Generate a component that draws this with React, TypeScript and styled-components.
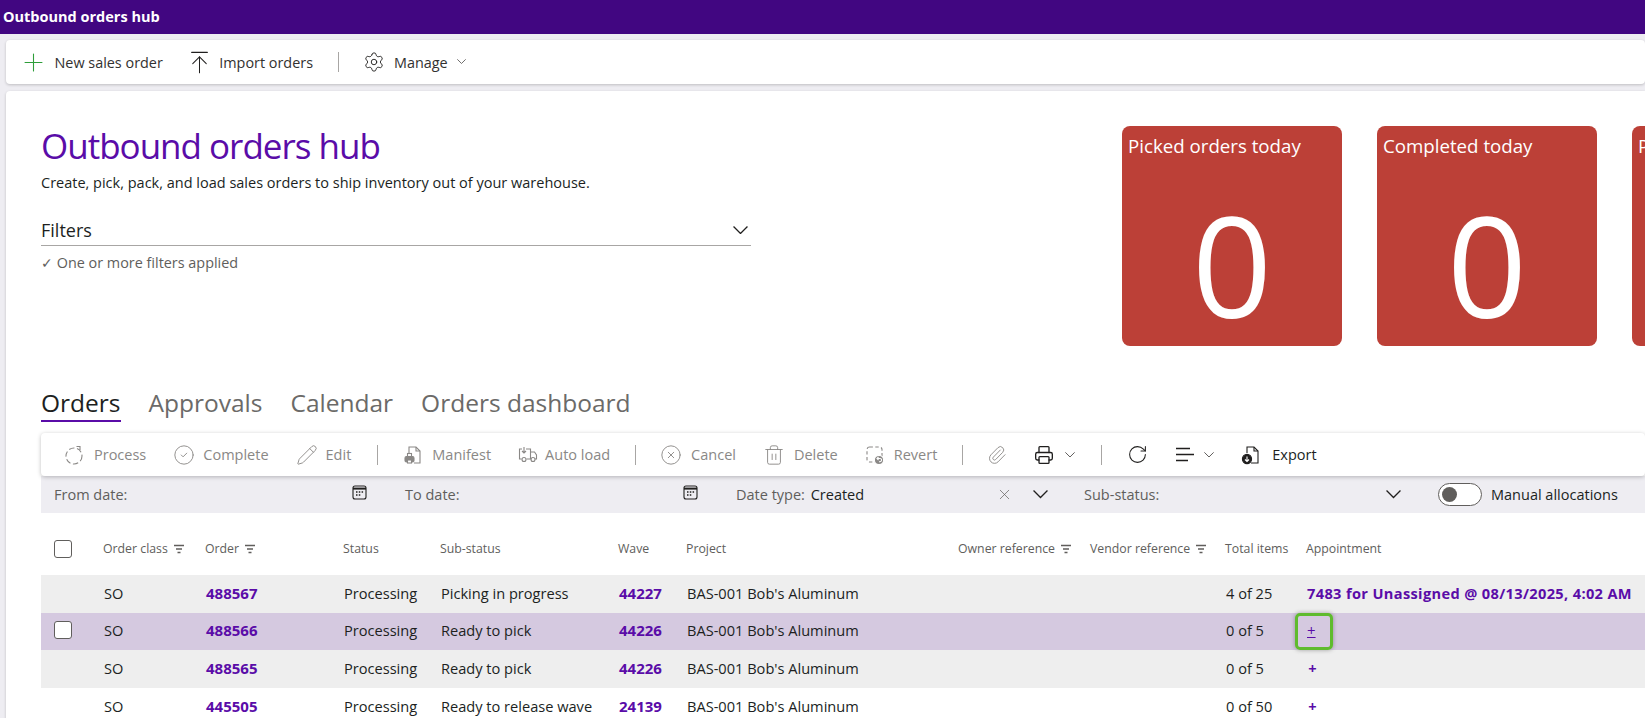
import React from 'react';
import styled, { createGlobalStyle } from 'styled-components';
import {
  ArrowUpToLine,
  CircleCheck,
  CircleX,
  Paperclip,
  Pencil,
  Plus,
  Printer,
  RotateCw,
  Settings,
  Trash2,
  X,
} from 'lucide-react';

const GlobalStyle = createGlobalStyle`
  html, body {
    margin: 0;
    height: 100%;
    overflow: hidden;
    background: #eeedf2;
    font-family: "Open Sans", "Noto Sans", sans-serif;
    color: #201f1e;
  }
`;

const MUTED = '#8a8886';
const DARK = '#201f1e';
const COLUMNS = '62px 102px 138px 97px 178px 68px 272px 132px 135px 81px 1fr';

const Page = styled.div`
  width: 1645px;
  height: 718px;
  overflow: hidden;
`;
const TitleBar = styled.div`
  height: 34px;
  background: #410681;
  color: #fff;
  font-weight: 700;
  font-size: 14.5px;
  line-height: 34px;
  padding-left: 3px;
`;
const CommandBar = styled.div`
  display: flex;
  align-items: center;
  height: 44px;
  margin: 6px 0 0 6px;
  padding-left: 13px;
  background: #fff;
  border-radius: 4px;
  box-shadow: 0 1px 3px rgba(0, 0, 0, 0.2);
`;
const CommandItem = styled.div<{ $gap?: number }>`
  display: flex;
  align-items: center;
  gap: ${(p) => p.$gap ?? 6.5}px;
  font-size: 14.4px;
  color: #323130;
  margin-right: 23px;
`;
const CommandMenu = styled(CommandItem)`
  gap: 9px;
  margin: 0 0 0 22px;
`;
const Divider = styled.div<{ $space?: number }>`
  width: 1px;
  height: 20px;
  margin: 0 ${(p) => p.$space ?? 0}px;
  background: #a8a6a4;
`;
const Card = styled.div`
  margin: 7px 0 0 6px;
  height: 640px;
  padding-left: 35px;
  background: #fff;
  border-radius: 4px 0 0 0;
  box-shadow: 0 1px 3px rgba(0, 0, 0, 0.2);
  overflow: hidden;
`;
const Hero = styled.div`
  display: flex;
  padding-top: 35px;
  height: 220px;
`;
const Intro = styled.div`
  width: 710px;
  flex: none;
  margin-right: 371px;
`;
const Title = styled.h1`
  margin: -4px 0 0;
  font-size: 35px;
  letter-spacing: -1px;
  font-weight: 400;
  line-height: 48px;
  color: #5a0ca8;
`;
const Lead = styled.p`
  margin: 3px 0 0;
  font-size: 14.5px;
  line-height: 20px;
  color: #201f1e;
`;
const FilterHead = styled.div`
  display: flex;
  align-items: center;
  justify-content: space-between;
  margin-top: 22px;
  height: 30px;
  padding-right: 3px;
  border-bottom: 1px solid #a8a6a4;
  font-size: 18px;
`;
const FilterNote = styled.div`
  margin-top: 7px;
  font-size: 14.4px;
  line-height: 20px;
  color: #605e5c;
`;
const Tile = styled.div`
  flex: none;
  box-sizing: border-box;
  width: 220px;
  height: 220px;
  margin-right: 35px;
  padding: 6px;
  background: #bc4037;
  border-radius: 8px;
  color: #fff;
`;
const TileLabel = styled.div`
  font-size: 18.7px;
  line-height: 28px;
  white-space: nowrap;
`;
const TileValue = styled.div`
  margin-top: 34px;
  text-align: center;
  font-size: 140px;
  font-weight: 400;
  line-height: 140px;
`;
const Tabs = styled.div`
  display: flex;
  gap: 28px;
  margin-top: 39px;
`;
const Tab = styled.div<{ $active?: boolean }>`
  height: 35px;
  line-height: 36px;
  font-size: 24.5px;
  color: ${(p) => (p.$active ? '#201f1e' : '#6b6a68')};
  border-bottom: 2px solid ${(p) => (p.$active ? '#5a0ca8' : 'transparent')};
`;
const Toolbar = styled.div`
  position: relative;
  display: flex;
  align-items: center;
  gap: 27px;
  height: 43px;
  margin-top: 11px;
  padding-left: 23px;
  background: #fff;
  border-radius: 4px;
  box-shadow: 0 1px 4px rgba(0, 0, 0, 0.25);
`;
const ToolItem = styled.div<{ $off?: boolean; $gap?: number }>`
  display: flex;
  align-items: center;
  gap: ${(p) => p.$gap ?? 9}px;
  font-size: 14.5px;
  color: ${(p) => (p.$off ? MUTED : DARK)};
  svg {
    flex: none;
  }
`;
const Strip = styled.div`
  display: flex;
  align-items: center;
  height: 37px;
  background: #eeedf2;
  font-size: 14.5px;
  color: #605e5c;
`;
const Field = styled.div<{ $width: number; $pad?: number }>`
  box-sizing: border-box;
  display: flex;
  align-items: center;
  justify-content: space-between;
  flex: none;
  width: ${(p) => p.$width}px;
  padding: 0 ${(p) => p.$pad ?? 25}px 0 13px;
`;
const FieldValue = styled.span`
  margin-left: 2px;
  color: #201f1e;
`;
const FieldIcons = styled.span`
  display: flex;
  align-items: center;
  gap: 20px;
`;
const Toggle = styled.div`
  box-sizing: border-box;
  flex: none;
  width: 44px;
  height: 23px;
  padding: 3px;
  margin-right: 9px;
  background: #fff;
  border: 1px solid #605e5c;
  border-radius: 12px;
`;
const Knob = styled.div`
  width: 15px;
  height: 15px;
  background: #605e5c;
  border-radius: 50%;
`;
const ToggleLabel = styled.span`
  color: #201f1e;
`;
const CalendarSvg = styled.svg`
  margin-bottom: 4px;
`;
const HeaderRow = styled.div`
  box-sizing: border-box;
  display: grid;
  grid-template-columns: ${COLUMNS};
  align-items: center;
  height: 62px;
  padding-top: 9px;
`;
const HeaderCell = styled.div`
  display: flex;
  align-items: center;
  gap: 5px;
  font-size: 12.3px;
  color: #605e5c;
  white-space: nowrap;
`;
const Row = styled.div<{ $tone: string }>`
  box-sizing: border-box;
  display: grid;
  grid-template-columns: ${COLUMNS};
  align-items: center;
  height: 37.6px;
  padding-bottom: 2px;
  font-size: 14.6px;
  background: ${(p) => p.$tone};
  white-space: nowrap;
  > span {
    margin-left: 1px;
  }
`;
const Check = styled.div`
  box-sizing: border-box;
  width: 18px;
  height: 18px;
  margin-left: 13px;
  background: #fff;
  border: 1px solid #605e5c;
  border-radius: 3px;
`;
const OrderLink = styled.span`
  font-weight: 700;
  font-size: 15px;
  color: #5a0ca8;
`;
const Appointment = styled.span`
  font-weight: 700;
  font-size: 14.6px;
  letter-spacing: 0.35px;
  color: #5a0ca8;
`;
const AddLink = styled.span`
  display: inline-block;
  width: 11px;
  text-align: center;
  font-weight: 700;
  color: #5a0ca8;
`;
const FocusedLink = styled.span`
  box-sizing: border-box;
  align-self: stretch;
  display: flex;
  align-items: center;
  width: 38px;
  && {
    margin: 0 0 -2px -11px;
  }
  padding: 0 0 2px 9px;
  border: 3.5px solid #5fbb2e;
  border-radius: 5px;
  box-shadow: 0 0 4px rgba(60, 60, 60, 0.45);
  color: #5a0ca8;
  text-decoration: underline;
  font-size: 15px;
  font-weight: 400;
`;

const Icon = ({ children, color = MUTED }: { children: React.ReactNode; color?: string }) => (
  <svg width="20" height="20" viewBox="0 0 20 20" fill="none" stroke={color} strokeWidth="1.1">
    {children}
  </svg>
);

const Chevron = ({ w, sw = 1.2, color = DARK }: { w: number; sw?: number; color?: string }) => (
  <svg width={w} height={(w * 8) / 14} viewBox="0 0 14 8" fill="none" stroke={color} strokeWidth={sw}>
    <path d="M.5.5 7 7 13.5.5" />
  </svg>
);

const FilterLines = () => (
  <svg width="12" height="10" viewBox="0 0 12 10" stroke="#605e5c" strokeWidth="1.3">
    <path d="M1 1.5h10M3 5h6M4.5 8.5h3" />
  </svg>
);

const Calendar = () => (
  <CalendarSvg width="15" height="15" viewBox="0 0 15 15" fill="none" stroke="#201f1e" strokeWidth="1.1">
    <rect x="1" y="1" width="13" height="13" rx="2" />
    <path d="M1 3.6h13" strokeWidth="2" />
    <path d="M4 7h1.5M6.8 7h1.5M9.6 7h1.5M4 10h1.5M6.8 10h1.5" strokeWidth="1.4" />
  </CalendarSvg>
);

const ProcessIcon = () => (
  <Icon>
    <circle cx="10" cy="11" r="8" strokeDasharray="5.5 2.6" />
    <path d="M12.5 1.5h3.5v3.5" />
  </Icon>
);

const ManifestIcon = () => (
  <Icon>
    <path d="M6 8V2h7l4 4v12h-6" />
    <path d="M13 2v4h4" />
    <rect x="2" y="11.5" width="9" height="5.5" rx="1.5" fill={MUTED} />
    <rect x="4.5" y="8.5" width="4" height="3" />
    <rect x="4.5" y="15" width="4" height="3" fill="#fff" />
  </Icon>
);

const TruckIcon = () => (
  <Icon>
    <path d="M4 4H1.5v10h2M8 4h4.5v10h-4M12.5 7h4l2 3v4h-1.5M12.5 14h1" />
    <path d="M6 2v6M4 6l2 2 2-2" />
    <circle cx="6" cy="14.5" r="2" />
    <circle cx="15" cy="14.5" r="2" />
  </Icon>
);

const RevertIcon = () => (
  <Icon>
    <rect x="2" y="2" width="15" height="15" rx="2.5" strokeDasharray="3.4 2.4" />
    <circle cx="14" cy="15" r="4.6" fill={MUTED} stroke="#fff" />
    <path d="M12 13.5h3a1.6 1.6 0 0 1 0 3.2h-1M13.5 12l-1.5 1.5 1.5 1.5" stroke="#fff" />
  </Icon>
);

const ExportIcon = () => (
  <Icon color={DARK}>
    <path d="M6 8V2h7l4 4v12h-7" />
    <path d="M13 2v4h4" />
    <circle cx="6" cy="14" r="4.6" fill={DARK} />
    <path d="M6 11.5v5M4 14.5l2 2 2-2" stroke="#fff" />
  </Icon>
);

const SortLines = () => (
  <Icon color={DARK}>
    <path d="M1 3.5h14M1 9.5h18M1 15.5h12" strokeWidth="1.5" />
  </Icon>
);

const tools = [
  { label: 'Process', gap: 10, icon: <ProcessIcon /> },
  { label: 'Complete', gap: 8, icon: <CircleCheck size={22} strokeWidth={1} color={MUTED} /> },
  { label: 'Edit', gap: 8, icon: <Pencil size={22} strokeWidth={1} color={MUTED} /> },
];
const tools2 = [
  { label: 'Manifest', gap: 9, icon: <ManifestIcon /> },
  { label: 'Auto load', gap: 7, icon: <TruckIcon /> },
];
const tools3 = [
  { label: 'Cancel', gap: 9, icon: <CircleX size={22} strokeWidth={1} color={MUTED} /> },
  { label: 'Delete', gap: 9, icon: <Trash2 size={22} strokeWidth={1} color={MUTED} /> },
  { label: 'Revert', gap: 9, icon: <RevertIcon /> },
];

const headers: [string, boolean][] = [
  ['Order class', true],
  ['Order', true],
  ['Status', false],
  ['Sub-status', false],
  ['Wave', false],
  ['Project', false],
  ['Owner reference', true],
  ['Vendor reference', true],
  ['Total items', false],
  ['Appointment', false],
];

const rows = [
  { id: '488567', sub: 'Picking in progress', wave: '44227', total: '4 of 25', tone: '#eeeeee' },
  { id: '488566', sub: 'Ready to pick', wave: '44226', total: '0 of 5', tone: '#d5c9e0' },
  { id: '488565', sub: 'Ready to pick', wave: '44226', total: '0 of 5', tone: '#eeeeee' },
  { id: '445505', sub: 'Ready to release wave', wave: '24139', total: '0 of 50', tone: '#ffffff' },
];

const App = () => {
  return (
    <Page>
      <GlobalStyle />
      <TitleBar>Outbound orders hub</TitleBar>
      <CommandBar>
        <CommandItem>
          <Plus size={29} strokeWidth={0.9} color="#2e9e3a" />
          New sales order
        </CommandItem>
        <CommandItem>
          <ArrowUpToLine size={27} strokeWidth={0.9} color={DARK} />
          Import orders
        </CommandItem>
        <Divider $space={2} />
        <CommandMenu>
          <Settings size={22} strokeWidth={1} color={DARK} />
          Manage
          <Chevron w={9} sw={1.4} color="#605e5c" />
        </CommandMenu>
      </CommandBar>
      <Card>
        <Hero>
          <Intro>
            <Title>Outbound orders hub</Title>
            <Lead>Create, pick, pack, and load sales orders to ship inventory out of your warehouse.</Lead>
            <FilterHead>
              Filters
              <Chevron w={15} />
            </FilterHead>
            <FilterNote>✓ One or more filters applied</FilterNote>
          </Intro>
          <Tile>
            <TileLabel>Picked orders today</TileLabel>
            <TileValue>0</TileValue>
          </Tile>
          <Tile>
            <TileLabel>Completed today</TileLabel>
            <TileValue>0</TileValue>
          </Tile>
          <Tile>
            <TileLabel>Packed today</TileLabel>
            <TileValue>0</TileValue>
          </Tile>
        </Hero>
        <Tabs>
          <Tab $active>Orders</Tab>
          <Tab>Approvals</Tab>
          <Tab>Calendar</Tab>
          <Tab>Orders dashboard</Tab>
        </Tabs>
        <Toolbar>
          {tools.map((t) => (
            <ToolItem key={t.label} $off $gap={t.gap}>
              {t.icon}
              {t.label}
            </ToolItem>
          ))}
          <Divider $space={-1.5} />
          {tools2.map((t) => (
            <ToolItem key={t.label} $off $gap={t.gap}>
              {t.icon}
              {t.label}
            </ToolItem>
          ))}
          <Divider $space={-2.5} />
          {tools3.map((t) => (
            <ToolItem key={t.label} $off $gap={t.gap}>
              {t.icon}
              {t.label}
            </ToolItem>
          ))}
          <Divider $space={-2.5} />
          <ToolItem $off>
            <Paperclip size={20} strokeWidth={1.1} color={MUTED} />
          </ToolItem>
          <ToolItem $gap={11}>
            <Printer size={20} strokeWidth={1.6} color={DARK} />
            <Chevron w={10} sw={1.4} color="#605e5c" />
          </ToolItem>
          <Divider $space={-1.5} />
          <ToolItem>
            <RotateCw size={21} strokeWidth={1.2} color={DARK} />
          </ToolItem>
          <ToolItem>
            <SortLines />
            <Chevron w={10} sw={1.4} color="#605e5c" />
          </ToolItem>
          <ToolItem $gap={11}>
            <ExportIcon />
            Export
          </ToolItem>
        </Toolbar>
        <Strip>
          <Field $width={351}>
            From date:
            <Calendar />
          </Field>
          <Field $width={331}>
            To date:
            <Calendar />
          </Field>
          <Field $width={348} $pad={23}>
            <span>
              Date type:<FieldValue> Created</FieldValue>
            </span>
            <FieldIcons>
              <X size={17} strokeWidth={1} color="#605e5c" />
              <Chevron w={15} />
            </FieldIcons>
          </Field>
          <Field $width={367} $pad={37}>
            Sub-status:
            <Chevron w={15} />
          </Field>
          <Toggle>
            <Knob />
          </Toggle>
          <ToggleLabel>Manual allocations</ToggleLabel>
        </Strip>
        <HeaderRow>
          <Check />
          {headers.map(([label, filter]) => (
            <HeaderCell key={label}>
              {label}
              {filter && <FilterLines />}
            </HeaderCell>
          ))}
        </HeaderRow>
        {rows.map((r, i) => (
          <Row key={r.id} $tone={r.tone}>
            {i === 1 ? <Check /> : <span />}
            <span>SO</span>
            <OrderLink>{r.id}</OrderLink>
            <span>Processing</span>
            <span>{r.sub}</span>
            <OrderLink>{r.wave}</OrderLink>
            <span>BAS-001 Bob's Aluminum</span>
            <span />
            <span />
            <span>{r.total}</span>
            {i === 0 && <Appointment>7483 for Unassigned @ 08/13/2025, 4:02 AM</Appointment>}
            {i === 1 && <FocusedLink>+</FocusedLink>}
            {i > 1 && <AddLink>+</AddLink>}
          </Row>
        ))}
      </Card>
    </Page>
  );
};

export default App;
